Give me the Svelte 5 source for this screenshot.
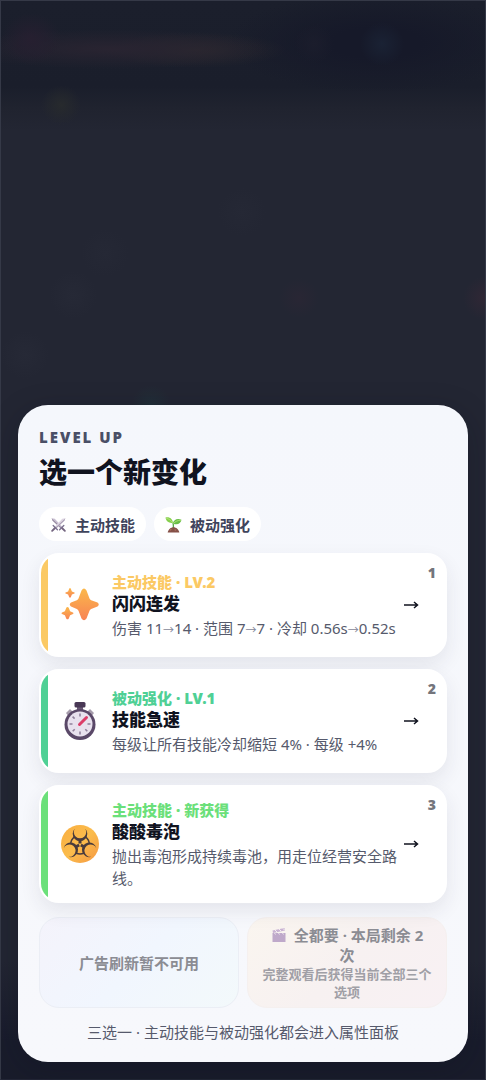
<script>
  const skills = [
    {
      id: 'spark',
      accent: 'gold',
      tag: '主动技能 · LV.2',
      name: '闪闪连发',
      desc: '伤害 11→14 · 范围 7→7 · 冷却 0.56s→0.52s'
    },
    {
      id: 'haste',
      accent: 'green',
      tag: '被动强化 · LV.1',
      name: '技能急速',
      desc: '每级让所有技能冷却缩短 4% · 每级 +4%'
    },
    {
      id: 'acid',
      accent: 'lime',
      tag: '主动技能 · 新获得',
      name: '酸酸毒泡',
      desc: '抛出毒泡形成持续毒池，用走位经营安全路线。'
    }
  ];

  let selected = $state(null);
</script>

<main class="stage">
  <section class="panel" aria-labelledby="panel-title">
    <p class="eyebrow">LEVEL UP</p>
    <h2 id="panel-title">选一个新变化</h2>

    <div class="chips">
      <span class="chip">
        <svg viewBox="0 0 32 32" aria-hidden="true">
          <path d="M3 4l6 1 14 15-3 3L5 9z" fill="#c9bfd2" />
          <path d="M3 4l18 17-1 2L5 9z" fill="#958a9f" />
          <path d="M29 4l-6 1L9 20l3 3L27 9z" fill="#ddd5e2" />
          <path d="M29 4L11 21l1 2L27 9z" fill="#a99db3" />
          <path d="M6 18l8 8M26 18l-8 8" stroke="#7b7190" stroke-width="2.5" stroke-linecap="round" />
          <path d="M9 23l-5 5M23 23l5 5" stroke="#73647f" stroke-width="3.5" stroke-linecap="round" />
        </svg>
        主动技能
      </span>
      <span class="chip">
        <svg viewBox="0 0 32 32" aria-hidden="true">
          <path d="M16 25c0-7 0-9-1-13" stroke="#55a447" stroke-width="2.5" fill="none" />
          <path d="M15 13C7 14 2 10 1 3c7-2 13 2 14 10z" fill="#86cf4d" />
          <path d="M15 14c1-7 8-10 16-7-1 7-8 11-16 7z" fill="#69bd48" />
          <path d="M2 4c5 1 9 4 13 9M16 14c4-4 8-6 14-6" stroke="#b9e77c" stroke-width="1.5" fill="none" />
          <path d="M5 31c1-6 6-10 11-10s10 4 11 10z" fill="#865148" />
          <path d="M9 27l3-2M18 26l3 1" stroke="#b27362" stroke-width="2" />
        </svg>
        被动强化
      </span>
    </div>

    <div class="cards">
      {#each skills as skill, i}
        <button
          type="button"
          class="card {skill.accent}"
          aria-pressed={selected === skill.id}
          onclick={() => (selected = skill.id)}
        >
          <span class="icon">
            {#if skill.id === 'spark'}
              <svg viewBox="0 0 40 40" aria-hidden="true">
                <defs>
                  <linearGradient id="spark" x1="0" y1="0" x2="0" y2="1">
                    <stop offset="0" stop-color="#fbb84a" />
                    <stop offset="1" stop-color="#f88355" />
                  </linearGradient>
                </defs>
                <g fill="url(#spark)">
                  <path d="M21.500 5.500Q24 1.500 26.500 5.500L29.500 13.500Q30 14.700 31.200 15.200L37.500 17.500Q40 19.500 37.500 21.500L31.200 24Q30 24.500 29.500 25.700L26.500 33.500Q24 37 21.500 33.500L18.500 25.700Q18 24.500 16.800 24L11 21.500Q8.500 19.500 11 17.500L16.800 15.200Q18 14.700 18.500 13.500z" />
                  <path d="M10 3q.600 0 .900.900l1 2.500 2.500 1q.900.500 0 1l-2.500 1-1 2.600q-.900 1.300-1.800 0l-1-2.600-2.500-1q-.900-.500 0-1l2.500-1 1-2.500Q9.400 3 10 3z" />
                  <path d="M7.500 22q.900 0 1.300 1.100l1.300 3.100 2.900 1.300q1.100.600 0 1.400l-2.900 1.300-1.300 3.300q-1.300 1.700-2.600 0l-1.300-3.300L2 28.900q-1.100-.800 0-1.400l2.900-1.300 1.300-3.100Q6.600 22 7.500 22z" />
                </g>
              </svg>
            {:else if skill.id === 'haste'}
              <svg viewBox="0 0 40 40" aria-hidden="true">
                <path d="M6 12l4-4 4 4-5 4zM34 12l-4-4-4 4 5 4z" fill="#a69cac" />
                <rect x="17" y="4" width="6" height="7" fill="#695874" />
                <rect x="14.500" y="1" width="11" height="5.500" rx="1.500" fill="#493855" />
                <circle cx="20" cy="23.500" r="15.500" fill="#5a4868" />
                <circle cx="20" cy="23" r="12.500" fill="#e8e1ee" />
                <path d="M20 12.500v3M20 30.500v3M9.500 23h3M27.500 23h3M12.600 15.600l2 2M25.300 28.300l2 2M14.700 28.300l-2 2" stroke="#90819c" stroke-width="1.600" />
                <path d="M19.500 23.500l7-7" stroke="#dc3d69" stroke-width="3" stroke-linecap="round" />
              </svg>
            {:else}
              <svg viewBox="0 0 40 40" aria-hidden="true">
                <defs>
                  <linearGradient id="hazard" x1="0" y1="0" x2="1" y2="1">
                    <stop offset="0" stop-color="#f9ad3f" />
                    <stop offset="0.500" stop-color="#fbbc4c" />
                    <stop offset="1" stop-color="#f59842" />
                  </linearGradient>
                </defs>
                <circle cx="20" cy="20" r="19" fill="url(#hazard)" />
                {#each [0, 120, 240] as angle}
                  <g transform="rotate({angle} 20 20.500)">
                    <path d="M15 4.500A7.300 7.300 0 1 0 25 4.500A6.200 6.200 0 1 1 15 4.500z" fill="#493b3c" />
                    <path d="M20 15.500v4" stroke="#493b3c" stroke-width="3" />
                    <path d="M16 29a9.300 9.300 0 0 0 8 0" fill="none" stroke="#493b3c" stroke-width="1.500" />
                  </g>
                {/each}
              </svg>
            {/if}
          </span>
          <span class="info">
            <span class="tag">{skill.tag}</span>
            <strong>{skill.name}</strong>
            <span class="desc">
              {#each skill.desc.split('→') as part, n}{#if n}<span class="to">→</span>{/if}{part}{/each}
            </span>
          </span>
          <svg class="arrow" viewBox="0 0 16 10" aria-hidden="true">
            <path d="M1 5h13M11 2l3.500 3-3.500 3" fill="none" stroke="currentColor" stroke-width="1.500" />
          </svg>
          <span class="key">{i + 1}</span>
        </button>
      {/each}
    </div>

    <div class="actions">
      <button type="button" class="refresh" disabled>广告刷新暂不可用</button>
      <button type="button" class="take-all" disabled>
        <span class="label">
          <svg viewBox="0 0 32 32" aria-hidden="true">
            <path d="M3 7L27 2l1 5L4 12z" fill="#9a74b7" />
            <path d="M8 6l4 4M16 4l4 4M24 3l3 3" stroke="#eee6f5" stroke-width="2" />
            <path d="M3 12h26v18H3z" fill="#8660a6" />
            <path d="M7 12l2 3M15 12l2 3M23 12l2 3" stroke="#e4d9ee" stroke-width="2" />
          </svg>全都要 · 本局剩余 2 次
        </span>
        <small>完整观看后获得当前全部三个选项</small>
      </button>
    </div>

    <p class="hint">三选一 · 主动技能与被动强化都会进入属性面板</p>
  </section>
</main>

<style>
  :global(body) {
    margin: 0;
    background: #232633;
  }

  .stage {
    box-sizing: border-box;
    display: flex;
    flex-direction: column;
    justify-content: flex-end;
    min-height: 100vh;
    padding: 17px;
    border: 1px solid #353947;
    border-bottom-color: #232636;
    font-family: 'Noto Sans', 'Noto Sans CJK SC', sans-serif;
    background:
      radial-gradient(circle at 60px 104px, #272a2d 0, transparent 20px),
      radial-gradient(ellipse 30px 26px at 30px 38px, #261f30 0, transparent 100%),
      radial-gradient(ellipse 160px 20px at 110px 48px, #292431 0, transparent 100%),
      radial-gradient(ellipse 90px 18px at 195px 49px, #2a272e 0, transparent 100%),
      radial-gradient(circle at 381px 43px, #1a2234 0, transparent 22px),
      radial-gradient(circle at 313px 43px, #1b1d2c 0, transparent 20px),
      radial-gradient(circle at 298px 297px, #292634 0, transparent 20px),
      radial-gradient(circle at 484px 297px, #302735 0, transparent 22px),
      radial-gradient(circle at 241px 211px, #252835 0, transparent 24px),
      radial-gradient(circle at 104px 252px, #252835 0, transparent 24px),
      radial-gradient(circle at 72px 294px, #262936 0, transparent 24px),
      radial-gradient(circle at 24px 354px, #262936 0, transparent 24px),
      radial-gradient(circle at 150px 404px, #212e38 0, transparent 20px),
      radial-gradient(ellipse 150px 50px at 375px 42px, #161929 30%, rgba(22, 25, 41, 0) 100%),
      linear-gradient(#1b1f2c 0, #1a1e2b 85px, #20232f 108px, #232633 130px, #232633 960px, #191c2c 1040px, #191c2b 100%);
  }

  .panel {
    padding: 22px 21px 19px;
    border-radius: 30px;
    color: #10131f;
    background: linear-gradient(#f5f7fc, #f7f8fc);
    box-shadow: 0 8px 30px rgba(10, 14, 28, 0.25);
  }

  p,
  h2 {
    margin: 0;
  }

  .eyebrow {
    font-size: 15px;
    line-height: 20px;
    font-weight: 900;
    letter-spacing: 2px;
    color: #4a4f66;
  }

  h2 {
    margin-top: 8px;
    font-size: 28px;
    line-height: 34px;
    font-weight: 900;
  }

  .chips {
    display: flex;
    gap: 8px;
    margin-top: 18px;
  }

  .chip {
    display: flex;
    align-items: center;
    gap: 8px;
    height: 34px;
    padding: 0 11px;
    border-radius: 17px;
    font-size: 15px;
    font-weight: 700;
    color: #3f445c;
    background: #fff;
  }

  .chip svg {
    width: 17px;
    height: 17px;
  }

  .cards {
    display: flex;
    flex-direction: column;
    gap: 12px;
    margin-top: 12px;
  }

  button {
    font-family: inherit;
  }

  .card {
    position: relative;
    display: flex;
    align-items: center;
    min-height: 104px;
    padding: 12px 26px 12px 19px;
    border: 2px solid #fff;
    border-radius: 20px;
    overflow: hidden;
    text-align: left;
    color: #10131f;
    background: #fff;
    box-shadow: 0 8px 20px rgba(40, 44, 66, 0.09);
    cursor: pointer;
  }

  .card::before {
    content: '';
    position: absolute;
    inset: 0 auto 0 0;
    width: 7px;
    background: var(--accent);
  }

  .gold {
    --accent: #fbc964;
  }

  .green {
    --accent: #4fd095;
  }

  .lime {
    --accent: #6be07a;
  }

  .icon {
    display: flex;
    flex: none;
    margin-right: 12px;
  }

  .icon svg {
    width: 40px;
    height: 40px;
  }

  .info {
    flex: 1;
    display: flex;
    flex-direction: column;
    min-width: 0;
    font-size: 15px;
    line-height: 22px;
  }

  .tag {
    font-weight: 900;
    color: var(--accent);
  }

  .info strong {
    font-size: 17px;
    font-weight: 900;
  }

  .desc {
    margin-top: 2px;
    color: #565a6c;
  }

  .to {
    font-size: 11px;
    line-height: 11px;
    color: #85889a;
  }

  .arrow {
    flex: none;
    width: 16px;
    height: 10px;
    margin-left: 3px;
  }

  .key {
    position: absolute;
    top: 8px;
    right: 9px;
    font-size: 14px;
    line-height: 20px;
    font-weight: 900;
    color: #74757c;
  }

  .actions {
    display: grid;
    grid-template-columns: 1fr 1fr;
    gap: 8px;
    margin-top: 14px;
  }

  .actions button {
    min-height: 91px;
    padding: 6px 14px;
    border: 1px solid #ebeef5;
    border-radius: 20px;
    font-size: 15px;
    line-height: 20px;
    font-weight: 700;
    color: #8b8c93;
  }

  .actions .refresh {
    background: linear-gradient(135deg, #f4f3fb, #f1f6fe 50%, #f3f9fb);
  }

  .actions .take-all {
    border-color: #f5f0ef;
    background: linear-gradient(135deg, #faf5ef, #f7f1f1 50%, #f8f1f4);
  }

  .label {
    display: block;
  }

  .label svg {
    width: 16px;
    height: 16px;
    margin-right: 7px;
    vertical-align: -2px;
    opacity: 0.5;
  }

  small {
    display: block;
    font-size: 13px;
    line-height: 18px;
    color: #a09fa6;
  }

  .hint {
    margin-top: 13px;
    font-size: 15px;
    line-height: 22px;
    text-align: center;
    color: #565a6c;
  }
</style>
